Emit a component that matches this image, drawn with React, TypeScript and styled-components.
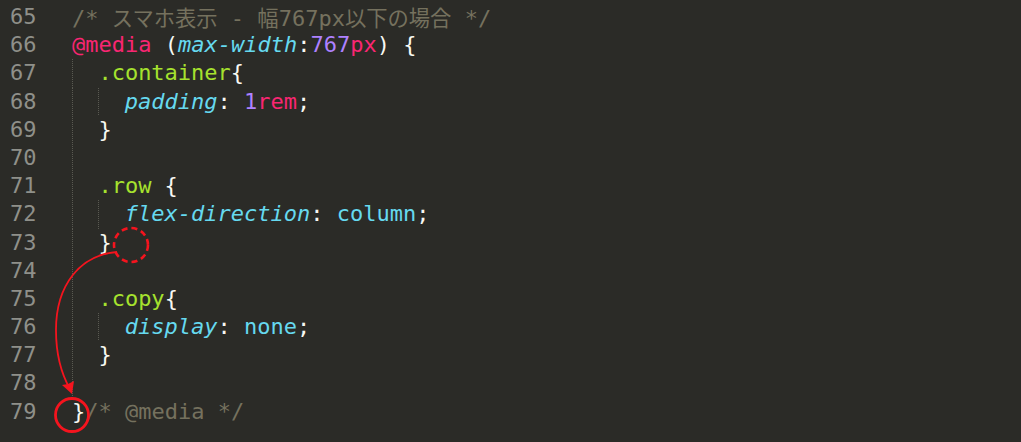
import React from "react";
import styled, { createGlobalStyle, css } from "styled-components";

const Global = createGlobalStyle`
  html, body { margin: 0; padding: 0; background: #2b2b27; }
  #root { width: 1021px; height: 442px; }
`;

const Editor = styled.div`
  position: relative;
  width: 1021px;
  height: 442px;
  overflow: hidden;
  background: #2b2b27;
  padding-top: 3px;
  box-sizing: border-box;
  font-family: "DejaVu Sans Mono", "Liberation Mono", "Noto Sans CJK JP", monospace;
  font-size: 22px;
`;

const Line = styled.div`
  display: flex;
  height: 28.2px;
  line-height: 28.2px;
  white-space: pre;
`;

const Gutter = styled.div`
  width: 62px;
  padding-left: 10px;
  color: #8f908a;
  flex: none;
`;

const Code = styled.div`
  display: flex;
  align-items: stretch;
  color: #f8f8f2;
`;

const Indent = styled.span<{ $guide: boolean }>`
  display: inline-block;
  width: 26.4px;
  flex: none;
  box-sizing: border-box;
  ${(p) =>
    p.$guide &&
    css`
      background-image: linear-gradient(#5a5a52 50%, transparent 50%);
      background-size: 1px 2px;
      background-repeat: repeat-y;
      background-position: 0 0;
    `}
`;

type Kind = "c" | "pink" | "prop" | "purple" | "green" | "plain" | "val";

const colors: Record<Kind, string> = {
  c: "#75715e",
  pink: "#f92672",
  prop: "#66d9ef",
  purple: "#ae81ff",
  green: "#a6e22e",
  plain: "#f8f8f2",
  val: "#66d9ef",
};

const Tok = styled.span<{ $k: Kind }>`
  color: ${(p) => colors[p.$k]};
  font-style: ${(p) => (p.$k === "prop" ? "oblique" : "normal")};
`;

const Cjk = styled.span`
  font-family: "Noto Sans CJK JP", sans-serif;
  font-size: 21.3px;
`;

const Overlay = styled.svg`
  position: absolute;
  left: 0;
  top: 0;
  pointer-events: none;
`;

type T = [Kind, React.ReactNode];

const lines: { n: number; guides: boolean[]; toks: T[] }[] = [
  {
    n: 65,
    guides: [],
    toks: [
      [
        "c",
        <>
          /* <Cjk>スマホ表示</Cjk> - <Cjk>幅</Cjk>767px<Cjk>以下の場合</Cjk> */
        </>,
      ],
    ],
  },
  {
    n: 66,
    guides: [],
    toks: [
      ["pink", "@media"],
      ["plain", " ("],
      ["prop", "max-width"],
      ["plain", ":"],
      ["purple", "767"],
      ["pink", "px"],
      ["plain", ") {"],
    ],
  },
  { n: 67, guides: [true], toks: [["green", ".container"], ["plain", "{"]] },
  {
    n: 68,
    guides: [true, true],
    toks: [
      ["prop", "padding"],
      ["plain", ": "],
      ["purple", "1"],
      ["pink", "rem"],
      ["plain", ";"],
    ],
  },
  { n: 69, guides: [true], toks: [["plain", "}"]] },
  { n: 70, guides: [true], toks: [] },
  { n: 71, guides: [true], toks: [["green", ".row"], ["plain", " {"]] },
  {
    n: 72,
    guides: [true, true],
    toks: [
      ["prop", "flex-direction"],
      ["plain", ": "],
      ["val", "column"],
      ["plain", ";"],
    ],
  },
  { n: 73, guides: [true], toks: [["plain", "}"]] },
  { n: 74, guides: [true], toks: [] },
  { n: 75, guides: [true], toks: [["green", ".copy"], ["plain", "{"]] },
  {
    n: 76,
    guides: [true, true],
    toks: [
      ["prop", "display"],
      ["plain", ": "],
      ["val", "none"],
      ["plain", ";"],
    ],
  },
  { n: 77, guides: [true], toks: [["plain", "}"]] },
  { n: 78, guides: [true], toks: [] },
  { n: 79, guides: [], toks: [["plain", "}"], ["c", "/* @media */"]] },
];

export default function App() {
  return (
    <>
      <Global />
      <Editor>
        {lines.map((l) => (
          <Line key={l.n}>
            <Gutter>{l.n}</Gutter>
            <Code>
              {l.guides.map((g, i) => (
                <Indent key={i} $guide={g} />
              ))}
              {l.toks.map((t, i) => (
                <Tok key={i} $k={t[0]}>
                  {t[1]}
                </Tok>
              ))}
            </Code>
          </Line>
        ))}
        <Overlay width="1021" height="442" viewBox="0 0 1021 442">
          <circle
            cx="131"
            cy="245"
            r="17"
            fill="none"
            stroke="#f5141e"
            strokeWidth="2.6"
            strokeDasharray="6 4"
          />
          <circle cx="72" cy="415" r="16.5" fill="none" stroke="#f5141e" strokeWidth="2.8" />
          <path
            d="M 117 252 C 80 255, 56 285, 56 330 C 56 355, 62 375, 70 389"
            fill="none"
            stroke="#f5141e"
            strokeWidth="1.8"
          />
          <path d="M 72 394 L 62 385 L 68 384 L 74 381 Z" fill="#f5141e" />
        </Overlay>
      </Editor>
    </>
  );
}
